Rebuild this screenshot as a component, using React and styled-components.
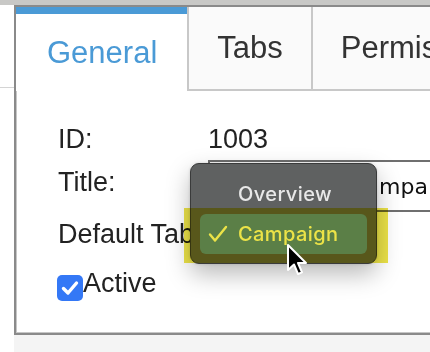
import React from "react";
import styled, { createGlobalStyle } from "styled-components";

const GlobalStyle = createGlobalStyle`
  html, body { margin: 0; padding: 0; background: #ffffff; }
  body { font-family: "Liberation Sans", Arial, sans-serif; }
`;

const Page = styled.div`
  position: relative;
  width: 430px;
  height: 352px;
  overflow: hidden;
  background: #ffffff;
`;

const TopStrip = styled.div`
  height: 5px;
  background: #c8c8c6;
`;

const Body = styled.div`
  display: flex;
`;

const Side = styled.div`
  width: 14px;
  flex: none;
`;

const SideHeader = styled.div`
  height: 81px;
  border-bottom: 1px solid #d4d4d4;
  box-sizing: border-box;
  margin-top: 2px;
`;

const Main = styled.div`
  width: 640px;
  flex: none;
  display: flex;
  flex-direction: column;
`;

const Frame = styled.div`
  height: 330px;
  box-sizing: border-box;
  border: 2px solid #8a8a8a;
  border-right: none;
  box-shadow: inset 1px 0 0 #c6c6c6, inset 0 -1px 0 #c6c6c6;
  background: #ffffff;
  display: flex;
  flex-direction: column;
`;

const BottomStrip = styled.div`
  height: 17px;
  background: #f4f4f4;
`;

const TabBar = styled.div`
  display: flex;
  height: 84px;
  flex: none;
`;

const Tab = styled.div`
  box-sizing: border-box;
  height: 84px;
  display: flex;
  align-items: center;
  font-size: 31px;
  padding: ${(p) => (p.$active ? "0 30px 0 31px" : "0 28px")};
  color: ${(p) => (p.$active ? "#4a9ad6" : "#333333")};
  background: ${(p) => (p.$active ? "#ffffff" : "#fafafa")};
  border-top: ${(p) => (p.$active ? "7px solid #4a9ad6" : "none")};
  border-left: ${(p) => (p.$active ? "none" : "2px solid #c8c8c8")};
  border-bottom: ${(p) => (p.$active ? "none" : "2px solid #c8c8c8")};
  white-space: nowrap;
`;

const TabFill = styled.div`
  flex: 1;
  background: #fafafa;
  border-bottom: 2px solid #c8c8c8;
`;

const Form = styled.div`
  display: flex;
  flex-direction: column;
  padding: 33px 0 0 42px;
  font-size: 27px;
  color: #222222;
`;

const Row = styled.div`
  display: flex;
  align-items: flex-start;
  margin-top: ${(p) => p.$gap || 0}px;
  line-height: 31px;
`;

const Label = styled.div`
  width: 150px;
  flex: none;
  padding-top: ${(p) => p.$offset || 0}px;
  white-space: nowrap;
`;

const Value = styled.div`
  white-space: nowrap;
`;

const TextInput = styled.div`
  box-sizing: border-box;
  height: 52px;
  width: 400px;
  border: 2px solid #6f6f6f;
  border-right: none;
  display: flex;
  align-items: center;
  padding-left: 0;
  font-family: "DejaVu Sans", "Open Sans", sans-serif;
  font-size: 22px;
  color: #111111;
  white-space: nowrap;
`;

const Check = styled.span`
  width: 26px;
  height: 26px;
  margin: 7px 0 0 -1px;
  border-radius: 5px;
  background: #3478f6;
  display: flex;
  align-items: center;
  justify-content: center;
  flex: none;
`;

const CheckLabel = styled.span`
  white-space: nowrap;
`;

const Popup = styled.div`
  position: absolute;
  left: 190px;
  top: 163px;
  width: 187px;
  height: 101px;
  box-sizing: border-box;
  padding: 0 9px 9px;
  border-radius: 9px;
  background: #5f6161;
  border: 1px solid #3a3b3b;
  box-shadow: 0 10px 24px rgba(0, 0, 0, 0.28), 0 0 3px rgba(0, 0, 0, 0.15);
  font-family: Inter, "Noto Sans", sans-serif;
  font-weight: 500;
  font-size: 20px;
  display: flex;
  flex-direction: column;
`;

const MenuItem = styled.div`
  height: ${(p) => (p.$selected ? 40 : 41)}px;
  margin-top: ${(p) => (p.$selected ? 0 : 9)}px;
  flex: none;
  border-radius: 6px;
  display: flex;
  align-items: center;
  padding-left: ${(p) => (p.$selected ? 8 : 38)}px;
  background: ${(p) => (p.$selected ? "#628fff" : "transparent")};
  color: ${(p) => (p.$selected ? "#ffffff" : "#e8e8e8")};
  letter-spacing: 0.4px;
`;

const MenuCheck = styled.svg`
  width: 20px;
  height: 18px;
  margin-right: 10px;
  flex: none;
`;

const Highlight = styled.div`
  position: absolute;
  left: 184px;
  top: 208px;
  width: 204px;
  height: 55px;
  background: #ece347;
  mix-blend-mode: multiply;
  pointer-events: none;
`;

const Cursor = styled.svg`
  position: absolute;
  left: 285px;
  top: 243px;
  width: 24px;
  height: 36px;
`;

export default function App() {
  return (
    <Page>
      <GlobalStyle />
      <TopStrip />
      <Body>
        <Side>
          <SideHeader />
        </Side>
        <Main>
          <Frame>
            <TabBar>
              <Tab $active>General</Tab>
              <Tab>Tabs</Tab>
              <Tab>Permissions</Tab>
              <TabFill />
            </TabBar>
            <Form>
              <Row>
                <Label>ID:</Label>
                <Value>1003</Value>
              </Row>
              <Row $gap={5}>
                <Label $offset={7}>Title:</Label>
                <TextInput>Black Friday Campaign</TextInput>
              </Row>
              <Row $gap={7}>
                <Label>Default Tab:</Label>
              </Row>
              <Row $gap={18}>
                <Check>
                  <svg width="18" height="16" viewBox="0 0 18 16">
                    <path d="M2.5 8.5 L7 13 L15.5 3" fill="none" stroke="#ffffff" strokeWidth="3.4" strokeLinecap="round" strokeLinejoin="round" />
                  </svg>
                </Check>
                <CheckLabel>Active</CheckLabel>
              </Row>
            </Form>
          </Frame>
          <BottomStrip />
        </Main>
      </Body>
      <Popup>
        <MenuItem>Overview</MenuItem>
        <MenuItem $selected>
          <MenuCheck viewBox="0 0 20 18">
            <path d="M2 9.5 L7 15.5 L18 2" fill="none" stroke="#ffffff" strokeWidth="2.4" strokeLinecap="round" strokeLinejoin="round" />
          </MenuCheck>
          Campaign
        </MenuItem>
      </Popup>
      <Highlight />
      <Cursor viewBox="0 0 24 36">
        <path d="M3 2 L3 27 L9 21.5 L13 31 L17 29.3 L13 20 L21 20 Z" fill="#000000" stroke="#ffffff" strokeWidth="2" strokeLinejoin="round" />
      </Cursor>
    </Page>
  );
}
